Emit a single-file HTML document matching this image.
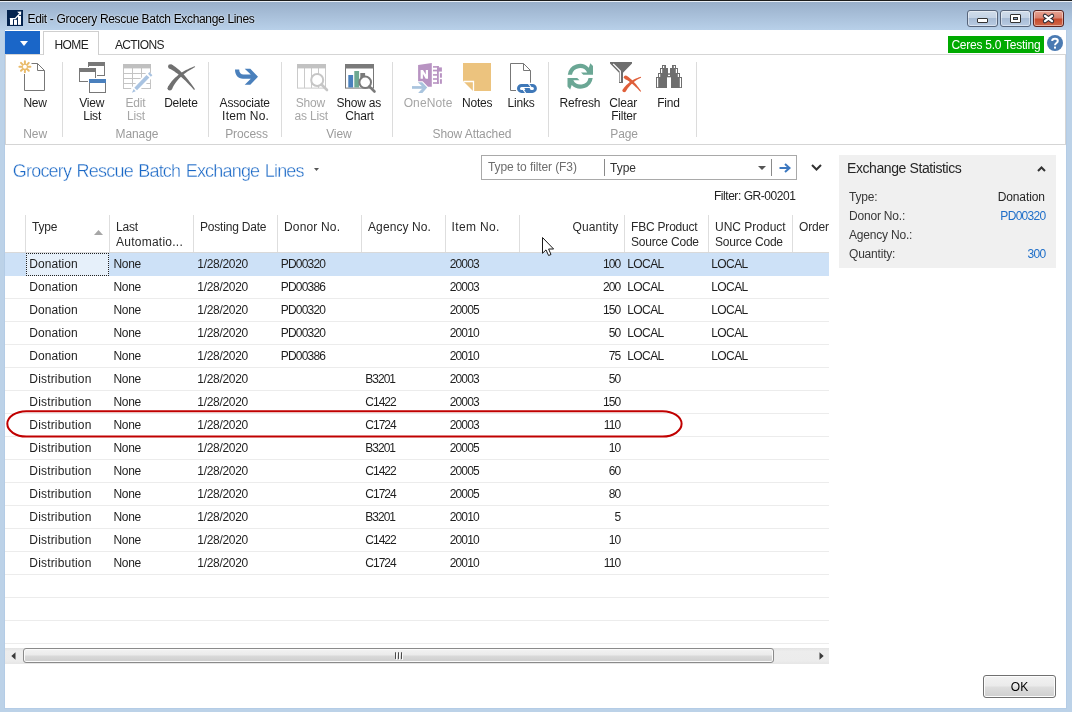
<!DOCTYPE html>
<html><head><meta charset="utf-8"><title>Edit - Grocery Rescue Batch Exchange Lines</title>
<style>
*{margin:0;padding:0;box-sizing:border-box}
html,body{width:1072px;height:712px;overflow:hidden;background:#fff;font-family:"Liberation Sans",sans-serif}
.t{position:absolute;white-space:nowrap}
.r{position:absolute}
svg{position:absolute;overflow:visible}
</style></head>
<body>
<div id="w" style="position:absolute;left:0;top:0;width:1072px;height:712px;will-change:transform">
<div class="r" style="left:0px;top:0px;width:1072px;height:712px;background:#bcd2e8;"></div>
<div class="r" style="left:0px;top:0px;width:1072px;height:30px;background:linear-gradient(#97adc8,#b8d0e9);"></div>
<div class="r" style="left:0px;top:0px;width:1072px;height:1px;background:#1c1c1c;"></div>
<div class="r" style="left:0px;top:1px;width:1072px;height:1px;background:#e9eff6;"></div>
<div class="r" style="left:4px;top:30px;width:1063px;height:679px;background:#b4cce6;"></div>
<div class="r" style="left:5px;top:30px;width:1061px;height:678px;background:#fff;"></div>
<svg style="left:7px;top:10px" width="16" height="16" viewBox="0 0 16 16">
<rect x="0" y="0" width="16" height="16" fill="#03234e"/>
<rect x="3" y="8.6" width="3" height="6.3" fill="#fff"/><rect x="7" y="9.8" width="3" height="5.1" fill="#fff"/><rect x="11" y="6" width="3" height="8.9" fill="#fff"/>
<path d="M2.8 8.7 H8.2 L12.6 4" stroke="#fff" stroke-width="1.3" fill="none"/><path d="M10.2 1.8 L14.2 1.6 L14 5.6 Z" fill="#fff"/>
</svg>
<div class="t" style="left:27.5px;top:12px;font-size:12px;line-height:15px;color:#000;letter-spacing:-0.33px;text-shadow:0 0 3px rgba(255,255,255,.55),0 0 2px rgba(255,255,255,.5)">Edit - Grocery Rescue Batch Exchange Lines</div>
<div class="r" style="left:967px;top:10px;width:31px;height:17px;background:linear-gradient(#d0dcea 0%,#c4d3e5 46%,#a7bbd4 50%,#b9cce3 100%);border:1px solid #56647a;border-radius:3px;box-shadow:inset 0 0 0 1px rgba(255,255,255,.45)"></div>
<div class="r" style="left:1000px;top:10px;width:31px;height:17px;background:linear-gradient(#d0dcea 0%,#c4d3e5 46%,#a7bbd4 50%,#b9cce3 100%);border:1px solid #56647a;border-radius:3px;box-shadow:inset 0 0 0 1px rgba(255,255,255,.45)"></div>
<div class="r" style="left:1033px;top:10px;width:31px;height:17px;background:linear-gradient(#e8a493 0%,#d98370 45%,#c74a2c 55%,#cf6a4a 100%);border:1px solid #5a2420;border-radius:3px;box-shadow:inset 0 0 0 1px rgba(255,255,255,.45)"></div>
<div class="r" style="left:977px;top:18px;width:11px;height:5px;background:#fff;border:1px solid #333;border-radius:1px"></div>
<div class="r" style="left:1010px;top:14px;width:11px;height:9px;background:#fff;border:1px solid #333;border-radius:1px"></div>
<div class="r" style="left:1013px;top:17px;width:5px;height:3px;background:#8aa2c0;border:1px solid #333"></div>
<svg style="left:1043px;top:14px" width="11" height="9" viewBox="0 0 11 9">
<path d="M2 1.9 L9 7.1 M9 1.9 L2 7.1" stroke="#2c2c34" stroke-width="4.4" stroke-linecap="round"/>
<path d="M2 1.9 L9 7.1 M9 1.9 L2 7.1" stroke="#fff" stroke-width="2.4" stroke-linecap="round"/>
</svg>
<div class="r" style="left:5px;top:31px;width:35px;height:23px;background:#1a66c8;"></div>
<svg style="left:19.5px;top:40.6px" width="8" height="5" viewBox="0 0 8 5"><path d="M0 0 H8 L4 5 Z" fill="#fff"/></svg>
<div class="r" style="left:43px;top:31px;width:56px;height:24px;background:#fff;border:1px solid #cfcfcf;border-bottom:none"></div>
<div class="r" style="left:5px;top:54px;width:38px;height:1px;background:#d5d5d5;"></div>
<div class="r" style="left:99px;top:54px;width:967px;height:1px;background:#d5d5d5;"></div>
<div class="t" style="left:54.5px;top:38px;font-size:12px;line-height:15px;color:#222;letter-spacing:-0.6px;">HOME</div>
<div class="t" style="left:115px;top:38px;font-size:12px;line-height:15px;color:#222;letter-spacing:-0.65px;">ACTIONS</div>
<div class="r" style="left:948px;top:36px;width:96px;height:17px;background:#00aa00;"></div>
<div class="t" style="left:951.4px;top:38px;font-size:12px;line-height:15px;color:#fff;letter-spacing:-0.25px;">Ceres 5.0 Testing</div>
<svg style="left:1047px;top:35px" width="16" height="16" viewBox="0 0 16 16">
<circle cx="8" cy="8" r="8" fill="#4a7ab2"/>
<path d="M5.2 6 C5.2 3 10.8 3 10.8 6 C10.8 8 8 8 8 10.2" stroke="#fff" stroke-width="2" fill="none"/>
<rect x="7" y="11.6" width="2" height="2" fill="#fff"/>
</svg>
<div class="r" style="left:5px;top:55px;width:1px;height:90px;background:#d5d5d5;"></div>
<div class="r" style="left:1065px;top:55px;width:1px;height:90px;background:#d5d5d5;"></div>
<div class="r" style="left:5px;top:144px;width:1061px;height:1px;background:#d5d5d5;"></div>
<div class="r" style="left:62px;top:62px;width:1px;height:75px;background:#dcdcdc;"></div>
<div class="r" style="left:208px;top:62px;width:1px;height:75px;background:#dcdcdc;"></div>
<div class="r" style="left:281px;top:62px;width:1px;height:75px;background:#dcdcdc;"></div>
<div class="r" style="left:392px;top:62px;width:1px;height:75px;background:#dcdcdc;"></div>
<div class="r" style="left:548px;top:62px;width:1px;height:75px;background:#dcdcdc;"></div>
<div class="r" style="left:696px;top:62px;width:1px;height:75px;background:#dcdcdc;"></div>
<div class="t" style="left:-24.799999999999997px;width:120px;text-align:center;text-indent:-0.2px;top:96px;font-size:12px;line-height:15px;color:#1e1e1e;letter-spacing:-0.2px;">New</div>
<div class="t" style="left:31.799999999999997px;width:120px;text-align:center;text-indent:-0.2px;top:96px;font-size:12px;line-height:15px;color:#1e1e1e;letter-spacing:-0.2px;">View</div>
<div class="t" style="left:32.2px;width:120px;text-align:center;text-indent:-0.2px;top:109px;font-size:12px;line-height:15px;color:#1e1e1e;letter-spacing:-0.2px;">List</div>
<div class="t" style="left:75.5px;width:120px;text-align:center;text-indent:-0.2px;top:96px;font-size:12px;line-height:15px;color:#a6a6a6;letter-spacing:-0.2px;">Edit</div>
<div class="t" style="left:76.0px;width:120px;text-align:center;text-indent:-0.2px;top:109px;font-size:12px;line-height:15px;color:#a6a6a6;letter-spacing:-0.2px;">List</div>
<div class="t" style="left:121.0px;width:120px;text-align:center;text-indent:-0.2px;top:96px;font-size:12px;line-height:15px;color:#1e1e1e;letter-spacing:-0.2px;">Delete</div>
<div class="t" style="left:184.8px;width:120px;text-align:center;text-indent:-0.2px;top:96px;font-size:12px;line-height:15px;color:#1e1e1e;letter-spacing:-0.2px;">Associate</div>
<div class="t" style="left:185.5px;width:120px;text-align:center;text-indent:0.2px;top:109px;font-size:12px;line-height:15px;color:#1e1e1e;letter-spacing:0.2px;">Item No.</div>
<div class="t" style="left:250.5px;width:120px;text-align:center;text-indent:-0.2px;top:96px;font-size:12px;line-height:15px;color:#a6a6a6;letter-spacing:-0.2px;">Show</div>
<div class="t" style="left:251.3px;width:120px;text-align:center;text-indent:-0.2px;top:109px;font-size:12px;line-height:15px;color:#a6a6a6;letter-spacing:-0.2px;">as List</div>
<div class="t" style="left:298.8px;width:120px;text-align:center;text-indent:-0.2px;top:96px;font-size:12px;line-height:15px;color:#1e1e1e;letter-spacing:-0.2px;">Show as</div>
<div class="t" style="left:299.6px;width:120px;text-align:center;text-indent:-0.2px;top:109px;font-size:12px;line-height:15px;color:#1e1e1e;letter-spacing:-0.2px;">Chart</div>
<div class="t" style="left:368.0px;width:120px;text-align:center;text-indent:0.1px;top:96px;font-size:12px;line-height:15px;color:#a6a6a6;letter-spacing:0.1px;">OneNote</div>
<div class="t" style="left:417.3px;width:120px;text-align:center;text-indent:-0.2px;top:96px;font-size:12px;line-height:15px;color:#1e1e1e;letter-spacing:-0.2px;">Notes</div>
<div class="t" style="left:461.20000000000005px;width:120px;text-align:center;text-indent:-0.2px;top:96px;font-size:12px;line-height:15px;color:#1e1e1e;letter-spacing:-0.2px;">Links</div>
<div class="t" style="left:520.0px;width:120px;text-align:center;text-indent:-0.2px;top:96px;font-size:12px;line-height:15px;color:#1e1e1e;letter-spacing:-0.2px;">Refresh</div>
<div class="t" style="left:563.2px;width:120px;text-align:center;text-indent:-0.2px;top:96px;font-size:12px;line-height:15px;color:#1e1e1e;letter-spacing:-0.2px;">Clear</div>
<div class="t" style="left:564.0px;width:120px;text-align:center;text-indent:-0.2px;top:109px;font-size:12px;line-height:15px;color:#1e1e1e;letter-spacing:-0.2px;">Filter</div>
<div class="t" style="left:608.6px;width:120px;text-align:center;text-indent:-0.2px;top:96px;font-size:12px;line-height:15px;color:#1e1e1e;letter-spacing:-0.2px;">Find</div>
<div class="t" style="left:-34.8px;width:140px;text-align:center;text-indent:-0.1px;top:127px;font-size:12px;line-height:15px;color:#9b9b9b;letter-spacing:-0.1px;">New</div>
<div class="t" style="left:67.0px;width:140px;text-align:center;text-indent:-0.1px;top:127px;font-size:12px;line-height:15px;color:#9b9b9b;letter-spacing:-0.1px;">Manage</div>
<div class="t" style="left:176.6px;width:140px;text-align:center;text-indent:-0.1px;top:127px;font-size:12px;line-height:15px;color:#9b9b9b;letter-spacing:-0.1px;">Process</div>
<div class="t" style="left:268.9px;width:140px;text-align:center;text-indent:-0.1px;top:127px;font-size:12px;line-height:15px;color:#9b9b9b;letter-spacing:-0.1px;">View</div>
<div class="t" style="left:402.0px;width:140px;text-align:center;text-indent:-0.1px;top:127px;font-size:12px;line-height:15px;color:#9b9b9b;letter-spacing:-0.1px;">Show Attached</div>
<div class="t" style="left:554.2px;width:140px;text-align:center;text-indent:-0.1px;top:127px;font-size:12px;line-height:15px;color:#9b9b9b;letter-spacing:-0.1px;">Page</div>
<svg style="left:0;top:0" width="1072" height="150" viewBox="0 0 1072 150">
<!-- New -->
<g stroke="#e9bb6a" stroke-width="2" stroke-linecap="round">
<path d="M24.9 61.3 V72.3 M19.4 66.8 H30.4 M21 62.9 L28.8 70.7 M28.8 62.9 L21 70.7"/>
</g>
<circle cx="24.9" cy="66.8" r="2" fill="#fff"/>
<path d="M31.5 63.5 H37.5 L44.5 70.5 V90.5 H24.5 V74" fill="none" stroke="#777" stroke-width="1"/>
<path d="M37.5 63.5 V70.5 H44.5" fill="none" stroke="#777" stroke-width="1"/>
<!-- View List -->
<rect x="88" y="62" width="17" height="4" fill="#787878"/>
<path d="M104.5 66 V76 M97 75.5 H105 M88.5 66 V67" stroke="#787878" stroke-width="1" fill="none"/>
<rect x="79" y="68" width="17" height="4" fill="#787878"/>
<path d="M79.5 72 V82 M79 81.5 H88 M95.5 72 V78" stroke="#787878" stroke-width="1" fill="none"/>
<rect x="89" y="79" width="17" height="4" fill="#4a80bd"/>
<path d="M89.5 83 V93 M105.5 83 V93 M89 92.5 H106" stroke="#787878" stroke-width="1" fill="none"/>
<!-- Edit List -->
<g fill="none" stroke="#c4c4c4" stroke-width="1">
<rect x="123.5" y="64.5" width="27" height="24"/>
<path d="M123 73.5 H151 M123 78.5 H151 M123 83.5 H151 M132.5 68 V89 M141.5 68 V89"/>
</g>
<rect x="123" y="64" width="28" height="4.4" fill="#c0c0c0"/>
<path d="M133.5 91 L151 73.5" stroke="#fff" stroke-width="7.5"/>
<path d="M134.3 87.7 L146.5 75.1 L149.4 77.6 L137 90.2 Z" fill="#a9c3e1"/>
<path d="M131.9 92.8 L133.7 89 L135.7 91.2 Z" fill="#a9c3e1"/>
<path d="M149.4 71.9 L152.4 75.3 L150.8 76.8 L148 73.7 Z" fill="#a9c3e1"/>
<!-- Delete -->
<path d="M169.34 68.59 L170.08 68.93 L170.85 69.32 L171.64 69.75 L172.46 70.23 L173.31 70.76 L174.19 71.34 L175.09 71.96 L176.01 72.63 L176.96 73.35 L177.94 74.12 L178.93 74.94 L179.96 75.80 L181.00 76.72 L182.07 77.68 L183.17 78.69 L184.28 79.75 L185.42 80.86 L186.58 82.01 L187.77 83.22 L188.98 84.47 L190.20 85.77 L191.46 87.12 L192.73 88.52 L194.03 89.97 L194.97 89.23 L193.87 87.62 L192.78 86.06 L191.70 84.55 L190.62 83.08 L189.57 81.67 L188.52 80.31 L187.48 79.00 L186.45 77.74 L185.43 76.53 L184.43 75.37 L183.43 74.26 L182.44 73.20 L181.47 72.19 L180.50 71.23 L179.54 70.32 L178.59 69.46 L177.65 68.65 L176.71 67.89 L175.79 67.18 L174.87 66.52 L173.96 65.92 L173.05 65.36 L172.15 64.86 L171.26 64.41 Z" fill="#707070"/><circle cx="170.3" cy="66.5" r="2.3" fill="#707070"/>
<path d="M194.82 66.29 L193.26 66.86 L191.74 67.46 L190.25 68.08 L188.80 68.73 L187.38 69.40 L186.00 70.10 L184.66 70.83 L183.36 71.58 L182.09 72.36 L180.86 73.16 L179.67 73.99 L178.52 74.85 L177.40 75.74 L176.32 76.65 L175.28 77.59 L174.28 78.56 L173.32 79.55 L172.40 80.57 L171.52 81.62 L170.68 82.70 L169.88 83.81 L169.12 84.94 L168.41 86.10 L167.74 87.28 L171.86 89.32 L172.36 88.22 L172.90 87.14 L173.48 86.08 L174.10 85.03 L174.75 84.00 L175.45 82.98 L176.18 81.97 L176.96 80.98 L177.78 80.00 L178.64 79.03 L179.54 78.08 L180.48 77.15 L181.47 76.23 L182.50 75.32 L183.57 74.43 L184.69 73.55 L185.85 72.69 L187.05 71.85 L188.29 71.02 L189.58 70.20 L190.92 69.41 L192.29 68.63 L193.71 67.86 L195.18 67.11 Z" fill="#707070"/><circle cx="169.8" cy="88.3" r="2.3" fill="#707070"/>
<!-- Associate -->
<path d="M235 69.5 H239.2 C239.2 73 241 74.5 243.5 74.5 H250.8 L244.7 68.8 H250.3 L258 76.8 L250.3 84.8 H244.7 L250.8 78.8 H243 C238 78.8 235 75 235 69.5 Z" fill="#4a80bc"/>
<!-- Show as List -->
<g fill="none" stroke="#cacaca" stroke-width="1">
<rect x="297.5" y="64.5" width="28" height="23.6"/>
<path d="M304.5 68 V88 M311.5 68 V88 M318.5 68 V88"/>
</g>
<rect x="297" y="64" width="29" height="4.4" fill="#c2c2c2"/>
<circle cx="317.2" cy="80" r="6" fill="#fff" stroke="#c6c6c6" stroke-width="2"/>
<path d="M321.5 84.5 L327 90" stroke="#c6c6c6" stroke-width="2.6" stroke-linecap="round"/>
<!-- Show as Chart -->
<rect x="345.5" y="64.5" width="28" height="23.6" fill="none" stroke="#777" stroke-width="1"/>
<rect x="345" y="64" width="29" height="4.5" fill="#7a7a7a"/>
<rect x="348.3" y="75" width="4.8" height="12.5" fill="#4a80bd"/>
<rect x="354.3" y="71" width="4.8" height="16.5" fill="#6da892"/>
<rect x="360.3" y="73" width="4.8" height="14" fill="#7a7a7a"/>
<circle cx="365.2" cy="82.3" r="5.8" fill="#fff" stroke="#7a7a7a" stroke-width="2"/>
<path d="M369.3 86.4 L374.5 91.5" stroke="#7a7a7a" stroke-width="2.6" stroke-linecap="round"/>
<!-- OneNote (disabled look) -->
<path d="M418.1 65.1 L431.8 63 V86.8 H428 L422.7 81.3 H418.1 Z" fill="#b893c2"/>
<path d="M420.6 78.7 V69.9 H423 L425.8 74.6 V69.9 H428 V78.7 H425.7 L422.9 74 V78.7 Z" fill="#fff"/>
<g fill="#b893c2">
<rect x="433" y="66.1" width="5.8" height="1.6"/><rect x="433" y="69.7" width="5" height="1.7"/><rect x="433" y="74.1" width="5" height="1.6"/>
<rect x="433" y="78.2" width="5" height="1.6"/><rect x="433" y="82.2" width="5.8" height="1.6"/>
<rect x="437" y="66.1" width="1.8" height="17.7"/>
<rect x="437" y="67.4" width="4.9" height="4.2"/><rect x="439.9" y="73.2" width="2" height="4.5"/><rect x="439.9" y="79.2" width="2" height="4.6"/>
</g>
<rect x="412" y="86.1" width="11.5" height="2.7" fill="#a9c4de"/>
<path d="M417.9 82.3 H422.2 L427.2 87.5 L422.4 92.9 H418.1 L423.3 87.5 Z" fill="#a9c4de"/>
<!-- Notes -->
<path d="M463 63 H491 V91 H473 L463 81 Z" fill="#ecc37e"/>
<path d="M463.5 81.5 H473.5 V91" fill="none" stroke="#fff" stroke-width="1.3"/>
<!-- Links -->
<path d="M516 90.5 H510.5 V63.5 H523.5 L530.5 70.5 V82.7" fill="none" stroke="#777" stroke-width="1"/>
<path d="M523.5 63.5 V70.5 H530.5" fill="none" stroke="#777" stroke-width="1"/>
<rect x="518.5" y="85.4" width="16.9" height="6" rx="3" ry="3" fill="#fff" stroke="#3f78b8" stroke-width="3"/>
<path d="M524.3 88.1 H529.6 L530.6 89.9 H525.3 Z" fill="#3f78b8"/>
<path d="M528.2 83.4 L531 87" stroke="#fff" stroke-width="1.1"/>
<path d="M523.3 89.9 L526 93.5" stroke="#fff" stroke-width="1.1"/>
<!-- Refresh -->
<path fill="#6ba795" d="M567.8 74.7 A12.3 12.3 0 0 1 588.8 67.7 L590.3 63.3 L593 66.1 L593 74.7 L583.3 74.7 L581 72.4 L587.2 72.4 A8.2 8.2 0 0 0 571.96 74.7 Z"/>
<path fill="#6ba795" transform="rotate(180 580.25 76.35)" d="M567.8 74.7 A12.3 12.3 0 0 1 588.8 67.7 L590.3 63.3 L593 66.1 L593 74.7 L583.3 74.7 L581 72.4 L587.2 72.4 A8.2 8.2 0 0 0 571.96 74.7 Z"/>
<!-- Clear Filter -->
<path d="M610 62 H632 V63.6 L623 72.8 V83 H619 V72.8 L610 63.6 Z" fill="#6e6e6e"/>
<path d="M613.2 63.9 L620.3 71 V81.9" fill="none" stroke="#fff" stroke-width="1.3"/>
<path d="M624.78 78.90 L625.28 79.14 L625.80 79.40 L626.33 79.69 L626.88 80.01 L627.44 80.35 L628.01 80.71 L628.60 81.11 L629.20 81.52 L629.82 81.97 L630.44 82.44 L631.08 82.94 L631.73 83.46 L632.39 84.01 L633.07 84.58 L633.75 85.19 L634.45 85.81 L635.16 86.47 L635.88 87.15 L636.61 87.86 L637.36 88.59 L638.11 89.35 L638.88 90.13 L639.66 90.94 L640.45 91.78 L641.15 91.22 L640.49 90.27 L639.83 89.34 L639.18 88.44 L638.54 87.57 L637.89 86.72 L637.26 85.90 L636.62 85.11 L635.99 84.34 L635.37 83.60 L634.75 82.89 L634.13 82.20 L633.52 81.54 L632.91 80.91 L632.31 80.30 L631.71 79.72 L631.11 79.16 L630.51 78.64 L629.92 78.14 L629.33 77.66 L628.75 77.22 L628.16 76.79 L627.58 76.40 L627.00 76.04 L626.42 75.70 Z" fill="#df5f3a"/><circle cx="625.6" cy="77.3" r="1.8" fill="#df5f3a"/>
<path d="M640.87 76.87 L640.00 77.08 L639.15 77.32 L638.30 77.59 L637.46 77.88 L636.63 78.20 L635.81 78.55 L635.00 78.92 L634.19 79.33 L633.40 79.76 L632.61 80.22 L631.83 80.70 L631.07 81.22 L630.31 81.76 L629.56 82.33 L628.83 82.92 L628.10 83.54 L627.39 84.19 L626.68 84.87 L625.99 85.58 L625.31 86.31 L624.64 87.06 L623.99 87.85 L623.34 88.66 L622.71 89.49 L625.69 91.51 L626.20 90.68 L626.73 89.88 L627.26 89.10 L627.80 88.35 L628.35 87.62 L628.92 86.90 L629.49 86.21 L630.08 85.54 L630.67 84.90 L631.28 84.27 L631.90 83.67 L632.53 83.08 L633.18 82.52 L633.83 81.98 L634.50 81.46 L635.19 80.96 L635.88 80.48 L636.59 80.03 L637.31 79.59 L638.05 79.17 L638.80 78.78 L639.56 78.41 L640.34 78.06 L641.13 77.73 Z" fill="#df5f3a"/><circle cx="624.2" cy="90.5" r="1.8" fill="#df5f3a"/>
<!-- Find -->
<g fill="#6e6e6e">
<rect x="662" y="65" width="4" height="3.2"/><rect x="660" y="68" width="8" height="5.2"/><rect x="658" y="73" width="10" height="4.2"/><rect x="656" y="77" width="11" height="11"/>
<rect x="672" y="65" width="4" height="3.2"/><rect x="670" y="68" width="8" height="5.2"/><rect x="670" y="73" width="10" height="4.2"/><rect x="671" y="77" width="11" height="11"/>
<rect x="667.5" y="73.3" width="3" height="4"/>
</g>
<g fill="#fff">
<rect x="663" y="66" width="1.2" height="2"/><rect x="661" y="69" width="1.2" height="4"/><rect x="659" y="74" width="1.2" height="3"/><rect x="657" y="78" width="1.2" height="9.2"/>
<rect x="673.8" y="66" width="1.2" height="2"/><rect x="675.8" y="69" width="1.2" height="4"/><rect x="677.8" y="74" width="1.2" height="3"/><rect x="679.8" y="78" width="1.2" height="9.2"/>
<rect x="668" y="74.8" width="2" height="1.2"/>
</g>
</svg>
<div class="t" style="left:12.8px;top:160px;font-size:18px;line-height:22px;color:#1a68c6;letter-spacing:-0.8px;-webkit-text-stroke:0.35px #fff;word-spacing:1.2px">Grocery Rescue Batch Exchange Lines</div>
<svg style="left:314px;top:168px" width="5" height="3" viewBox="0 0 5 3"><path d="M0 0 H5 L2.5 3 Z" fill="#555"/></svg>
<div class="r" style="left:481px;top:155px;width:316px;height:25px;border:1px solid #a9a9a9;background:#fff"></div>
<div class="r" style="left:604px;top:159px;width:1px;height:17px;background:#8a8a8a;"></div>
<div class="r" style="left:771px;top:159px;width:1px;height:17px;background:#8a8a8a;"></div>
<div class="t" style="left:488px;top:160px;font-size:12px;line-height:15px;color:#6d6d6d;letter-spacing:-0.1px;">Type to filter (F3)</div>
<div class="t" style="left:610px;top:161px;font-size:12px;line-height:15px;color:#333;">Type</div>
<svg style="left:758px;top:166px" width="8" height="4" viewBox="0 0 8 4"><path d="M0 0 H8 L4 4 Z" fill="#555"/></svg>
<svg style="left:779px;top:163px" width="12" height="10" viewBox="0 0 12 10">
<path d="M0.5 5 H10" stroke="#3c78c0" stroke-width="2"/><path d="M6 1 L10.5 5 L6 9" stroke="#3c78c0" stroke-width="2" fill="none"/>
</svg>
<svg style="left:811px;top:164px" width="11" height="7" viewBox="0 0 11 7"><path d="M1 1 L5.5 5.5 L10 1" stroke="#333" stroke-width="2" fill="none"/></svg>
<div class="t" style="right:276.55px;top:189px;font-size:12px;line-height:15px;color:#222;letter-spacing:-0.45px;">Filter: GR-00201</div>
<div class="r" style="left:25px;top:215px;width:1px;height:37px;background:#dedede;"></div>
<div class="r" style="left:109px;top:215px;width:1px;height:37px;background:#dedede;"></div>
<div class="r" style="left:193px;top:215px;width:1px;height:37px;background:#dedede;"></div>
<div class="r" style="left:277px;top:215px;width:1px;height:37px;background:#dedede;"></div>
<div class="r" style="left:361px;top:215px;width:1px;height:37px;background:#dedede;"></div>
<div class="r" style="left:445px;top:215px;width:1px;height:37px;background:#dedede;"></div>
<div class="r" style="left:519px;top:215px;width:1px;height:37px;background:#dedede;"></div>
<div class="r" style="left:624px;top:215px;width:1px;height:37px;background:#dedede;"></div>
<div class="r" style="left:708px;top:215px;width:1px;height:37px;background:#dedede;"></div>
<div class="r" style="left:792px;top:215px;width:1px;height:37px;background:#dedede;"></div>
<div class="r" style="left:5px;top:252px;width:824px;height:1px;background:#d9d9d9;"></div>
<div class="t" style="left:32px;top:220px;font-size:12px;line-height:15px;color:#2a2a2a;letter-spacing:-0.2px;">Type</div>
<div class="t" style="left:116px;top:220px;font-size:12px;line-height:15px;color:#2a2a2a;letter-spacing:-0.2px;">Last</div>
<div class="t" style="left:116px;top:235px;font-size:12px;line-height:15px;color:#2a2a2a;letter-spacing:0.25px;">Automatio...</div>
<div class="t" style="left:200px;top:220px;font-size:12px;line-height:15px;color:#2a2a2a;letter-spacing:-0.2px;">Posting Date</div>
<div class="t" style="left:284px;top:220px;font-size:12px;line-height:15px;color:#2a2a2a;letter-spacing:0.17px;">Donor No.</div>
<div class="t" style="left:368px;top:220px;font-size:12px;line-height:15px;color:#2a2a2a;letter-spacing:0.1px;">Agency No.</div>
<div class="t" style="left:451.5px;top:220px;font-size:12px;line-height:15px;color:#2a2a2a;letter-spacing:0.37px;">Item No.</div>
<div class="t" style="left:631px;top:220px;font-size:12px;line-height:15px;color:#2a2a2a;letter-spacing:-0.2px;">FBC Product</div>
<div class="t" style="left:631px;top:235px;font-size:12px;line-height:15px;color:#2a2a2a;letter-spacing:-0.2px;">Source Code</div>
<div class="t" style="left:715px;top:220px;font-size:12px;line-height:15px;color:#2a2a2a;letter-spacing:0.0px;">UNC Product</div>
<div class="t" style="left:715px;top:235px;font-size:12px;line-height:15px;color:#2a2a2a;letter-spacing:-0.2px;">Source Code</div>
<div class="t" style="left:799px;top:220px;font-size:12px;line-height:15px;color:#2a2a2a;letter-spacing:-0.2px;">Order</div>
<div class="t" style="right:453.65px;top:220px;font-size:12px;line-height:15px;color:#2a2a2a;letter-spacing:0.15px;">Quantity</div>
<svg style="left:94px;top:230px" width="9" height="5" viewBox="0 0 9 5"><path d="M0 5 L4.5 0 L9 5 Z" fill="#a6a6a6"/></svg>
<div class="r" style="left:5px;top:275px;width:824px;height:1px;background:#ececec;"></div>
<div class="r" style="left:5px;top:298px;width:824px;height:1px;background:#ececec;"></div>
<div class="r" style="left:5px;top:321px;width:824px;height:1px;background:#ececec;"></div>
<div class="r" style="left:5px;top:344px;width:824px;height:1px;background:#ececec;"></div>
<div class="r" style="left:5px;top:367px;width:824px;height:1px;background:#ececec;"></div>
<div class="r" style="left:5px;top:390px;width:824px;height:1px;background:#ececec;"></div>
<div class="r" style="left:5px;top:413px;width:824px;height:1px;background:#ececec;"></div>
<div class="r" style="left:5px;top:436px;width:824px;height:1px;background:#ececec;"></div>
<div class="r" style="left:5px;top:459px;width:824px;height:1px;background:#ececec;"></div>
<div class="r" style="left:5px;top:482px;width:824px;height:1px;background:#ececec;"></div>
<div class="r" style="left:5px;top:505px;width:824px;height:1px;background:#ececec;"></div>
<div class="r" style="left:5px;top:528px;width:824px;height:1px;background:#ececec;"></div>
<div class="r" style="left:5px;top:551px;width:824px;height:1px;background:#ececec;"></div>
<div class="r" style="left:5px;top:574px;width:824px;height:1px;background:#ececec;"></div>
<div class="r" style="left:5px;top:597px;width:824px;height:1px;background:#ececec;"></div>
<div class="r" style="left:5px;top:620px;width:824px;height:1px;background:#ececec;"></div>
<div class="r" style="left:5px;top:643px;width:824px;height:1px;background:#ececec;"></div>
<div class="r" style="left:5px;top:253px;width:824px;height:23px;background:#cde1f7;"></div>
<div class="r" style="left:26px;top:253px;width:83px;height:23px;background:#e6f0fa;border:1px dotted #222"></div>
<div class="t" style="left:29.3px;top:257px;font-size:12px;line-height:15px;color:#1e1e1e;letter-spacing:0.05px;">Donation</div>
<div class="t" style="left:113.5px;top:257px;font-size:12px;line-height:15px;color:#1e1e1e;letter-spacing:-0.35px;">None</div>
<div class="t" style="left:197.3px;top:257px;font-size:12px;line-height:15px;color:#1e1e1e;letter-spacing:-0.3px;">1/28/2020</div>
<div class="t" style="left:280.8px;top:257px;font-size:12px;line-height:15px;color:#1e1e1e;letter-spacing:-0.8px;">PD00320</div>
<div class="t" style="left:449.7px;top:257px;font-size:12px;line-height:15px;color:#1e1e1e;letter-spacing:-0.85px;">20003</div>
<div class="t" style="right:451.65px;top:257px;font-size:12px;line-height:15px;color:#1e1e1e;letter-spacing:-0.85px;">100</div>
<div class="t" style="left:627.3px;top:257px;font-size:12px;line-height:15px;color:#1e1e1e;letter-spacing:-0.6px;">LOCAL</div>
<div class="t" style="left:711.3px;top:257px;font-size:12px;line-height:15px;color:#1e1e1e;letter-spacing:-0.6px;">LOCAL</div>
<div class="t" style="left:29.3px;top:280px;font-size:12px;line-height:15px;color:#1e1e1e;letter-spacing:0.05px;">Donation</div>
<div class="t" style="left:113.5px;top:280px;font-size:12px;line-height:15px;color:#1e1e1e;letter-spacing:-0.35px;">None</div>
<div class="t" style="left:197.3px;top:280px;font-size:12px;line-height:15px;color:#1e1e1e;letter-spacing:-0.3px;">1/28/2020</div>
<div class="t" style="left:280.8px;top:280px;font-size:12px;line-height:15px;color:#1e1e1e;letter-spacing:-0.8px;">PD00386</div>
<div class="t" style="left:449.7px;top:280px;font-size:12px;line-height:15px;color:#1e1e1e;letter-spacing:-0.85px;">20003</div>
<div class="t" style="right:451.65px;top:280px;font-size:12px;line-height:15px;color:#1e1e1e;letter-spacing:-0.85px;">200</div>
<div class="t" style="left:627.3px;top:280px;font-size:12px;line-height:15px;color:#1e1e1e;letter-spacing:-0.6px;">LOCAL</div>
<div class="t" style="left:711.3px;top:280px;font-size:12px;line-height:15px;color:#1e1e1e;letter-spacing:-0.6px;">LOCAL</div>
<div class="t" style="left:29.3px;top:303px;font-size:12px;line-height:15px;color:#1e1e1e;letter-spacing:0.05px;">Donation</div>
<div class="t" style="left:113.5px;top:303px;font-size:12px;line-height:15px;color:#1e1e1e;letter-spacing:-0.35px;">None</div>
<div class="t" style="left:197.3px;top:303px;font-size:12px;line-height:15px;color:#1e1e1e;letter-spacing:-0.3px;">1/28/2020</div>
<div class="t" style="left:280.8px;top:303px;font-size:12px;line-height:15px;color:#1e1e1e;letter-spacing:-0.8px;">PD00320</div>
<div class="t" style="left:449.7px;top:303px;font-size:12px;line-height:15px;color:#1e1e1e;letter-spacing:-0.85px;">20005</div>
<div class="t" style="right:451.65px;top:303px;font-size:12px;line-height:15px;color:#1e1e1e;letter-spacing:-0.85px;">150</div>
<div class="t" style="left:627.3px;top:303px;font-size:12px;line-height:15px;color:#1e1e1e;letter-spacing:-0.6px;">LOCAL</div>
<div class="t" style="left:711.3px;top:303px;font-size:12px;line-height:15px;color:#1e1e1e;letter-spacing:-0.6px;">LOCAL</div>
<div class="t" style="left:29.3px;top:326px;font-size:12px;line-height:15px;color:#1e1e1e;letter-spacing:0.05px;">Donation</div>
<div class="t" style="left:113.5px;top:326px;font-size:12px;line-height:15px;color:#1e1e1e;letter-spacing:-0.35px;">None</div>
<div class="t" style="left:197.3px;top:326px;font-size:12px;line-height:15px;color:#1e1e1e;letter-spacing:-0.3px;">1/28/2020</div>
<div class="t" style="left:280.8px;top:326px;font-size:12px;line-height:15px;color:#1e1e1e;letter-spacing:-0.8px;">PD00320</div>
<div class="t" style="left:449.7px;top:326px;font-size:12px;line-height:15px;color:#1e1e1e;letter-spacing:-0.85px;">20010</div>
<div class="t" style="right:451.65px;top:326px;font-size:12px;line-height:15px;color:#1e1e1e;letter-spacing:-0.85px;">50</div>
<div class="t" style="left:627.3px;top:326px;font-size:12px;line-height:15px;color:#1e1e1e;letter-spacing:-0.6px;">LOCAL</div>
<div class="t" style="left:711.3px;top:326px;font-size:12px;line-height:15px;color:#1e1e1e;letter-spacing:-0.6px;">LOCAL</div>
<div class="t" style="left:29.3px;top:349px;font-size:12px;line-height:15px;color:#1e1e1e;letter-spacing:0.05px;">Donation</div>
<div class="t" style="left:113.5px;top:349px;font-size:12px;line-height:15px;color:#1e1e1e;letter-spacing:-0.35px;">None</div>
<div class="t" style="left:197.3px;top:349px;font-size:12px;line-height:15px;color:#1e1e1e;letter-spacing:-0.3px;">1/28/2020</div>
<div class="t" style="left:280.8px;top:349px;font-size:12px;line-height:15px;color:#1e1e1e;letter-spacing:-0.8px;">PD00386</div>
<div class="t" style="left:449.7px;top:349px;font-size:12px;line-height:15px;color:#1e1e1e;letter-spacing:-0.85px;">20010</div>
<div class="t" style="right:451.65px;top:349px;font-size:12px;line-height:15px;color:#1e1e1e;letter-spacing:-0.85px;">75</div>
<div class="t" style="left:627.3px;top:349px;font-size:12px;line-height:15px;color:#1e1e1e;letter-spacing:-0.6px;">LOCAL</div>
<div class="t" style="left:711.3px;top:349px;font-size:12px;line-height:15px;color:#1e1e1e;letter-spacing:-0.6px;">LOCAL</div>
<div class="t" style="left:29.3px;top:372px;font-size:12px;line-height:15px;color:#1e1e1e;letter-spacing:0.18px;">Distribution</div>
<div class="t" style="left:113.5px;top:372px;font-size:12px;line-height:15px;color:#1e1e1e;letter-spacing:-0.35px;">None</div>
<div class="t" style="left:197.3px;top:372px;font-size:12px;line-height:15px;color:#1e1e1e;letter-spacing:-0.3px;">1/28/2020</div>
<div class="t" style="left:365.3px;top:372px;font-size:12px;line-height:15px;color:#1e1e1e;letter-spacing:-1.0px;">B3201</div>
<div class="t" style="left:449.7px;top:372px;font-size:12px;line-height:15px;color:#1e1e1e;letter-spacing:-0.85px;">20003</div>
<div class="t" style="right:451.65px;top:372px;font-size:12px;line-height:15px;color:#1e1e1e;letter-spacing:-0.85px;">50</div>
<div class="t" style="left:29.3px;top:395px;font-size:12px;line-height:15px;color:#1e1e1e;letter-spacing:0.18px;">Distribution</div>
<div class="t" style="left:113.5px;top:395px;font-size:12px;line-height:15px;color:#1e1e1e;letter-spacing:-0.35px;">None</div>
<div class="t" style="left:197.3px;top:395px;font-size:12px;line-height:15px;color:#1e1e1e;letter-spacing:-0.3px;">1/28/2020</div>
<div class="t" style="left:365.3px;top:395px;font-size:12px;line-height:15px;color:#1e1e1e;letter-spacing:-1.0px;">C1422</div>
<div class="t" style="left:449.7px;top:395px;font-size:12px;line-height:15px;color:#1e1e1e;letter-spacing:-0.85px;">20003</div>
<div class="t" style="right:451.65px;top:395px;font-size:12px;line-height:15px;color:#1e1e1e;letter-spacing:-0.85px;">150</div>
<div class="t" style="left:29.3px;top:418px;font-size:12px;line-height:15px;color:#1e1e1e;letter-spacing:0.18px;">Distribution</div>
<div class="t" style="left:113.5px;top:418px;font-size:12px;line-height:15px;color:#1e1e1e;letter-spacing:-0.35px;">None</div>
<div class="t" style="left:197.3px;top:418px;font-size:12px;line-height:15px;color:#1e1e1e;letter-spacing:-0.3px;">1/28/2020</div>
<div class="t" style="left:365.3px;top:418px;font-size:12px;line-height:15px;color:#1e1e1e;letter-spacing:-1.0px;">C1724</div>
<div class="t" style="left:449.7px;top:418px;font-size:12px;line-height:15px;color:#1e1e1e;letter-spacing:-0.85px;">20003</div>
<div class="t" style="right:451.65px;top:418px;font-size:12px;line-height:15px;color:#1e1e1e;letter-spacing:-0.85px;">110</div>
<div class="t" style="left:29.3px;top:441px;font-size:12px;line-height:15px;color:#1e1e1e;letter-spacing:0.18px;">Distribution</div>
<div class="t" style="left:113.5px;top:441px;font-size:12px;line-height:15px;color:#1e1e1e;letter-spacing:-0.35px;">None</div>
<div class="t" style="left:197.3px;top:441px;font-size:12px;line-height:15px;color:#1e1e1e;letter-spacing:-0.3px;">1/28/2020</div>
<div class="t" style="left:365.3px;top:441px;font-size:12px;line-height:15px;color:#1e1e1e;letter-spacing:-1.0px;">B3201</div>
<div class="t" style="left:449.7px;top:441px;font-size:12px;line-height:15px;color:#1e1e1e;letter-spacing:-0.85px;">20005</div>
<div class="t" style="right:451.65px;top:441px;font-size:12px;line-height:15px;color:#1e1e1e;letter-spacing:-0.85px;">10</div>
<div class="t" style="left:29.3px;top:464px;font-size:12px;line-height:15px;color:#1e1e1e;letter-spacing:0.18px;">Distribution</div>
<div class="t" style="left:113.5px;top:464px;font-size:12px;line-height:15px;color:#1e1e1e;letter-spacing:-0.35px;">None</div>
<div class="t" style="left:197.3px;top:464px;font-size:12px;line-height:15px;color:#1e1e1e;letter-spacing:-0.3px;">1/28/2020</div>
<div class="t" style="left:365.3px;top:464px;font-size:12px;line-height:15px;color:#1e1e1e;letter-spacing:-1.0px;">C1422</div>
<div class="t" style="left:449.7px;top:464px;font-size:12px;line-height:15px;color:#1e1e1e;letter-spacing:-0.85px;">20005</div>
<div class="t" style="right:451.65px;top:464px;font-size:12px;line-height:15px;color:#1e1e1e;letter-spacing:-0.85px;">60</div>
<div class="t" style="left:29.3px;top:487px;font-size:12px;line-height:15px;color:#1e1e1e;letter-spacing:0.18px;">Distribution</div>
<div class="t" style="left:113.5px;top:487px;font-size:12px;line-height:15px;color:#1e1e1e;letter-spacing:-0.35px;">None</div>
<div class="t" style="left:197.3px;top:487px;font-size:12px;line-height:15px;color:#1e1e1e;letter-spacing:-0.3px;">1/28/2020</div>
<div class="t" style="left:365.3px;top:487px;font-size:12px;line-height:15px;color:#1e1e1e;letter-spacing:-1.0px;">C1724</div>
<div class="t" style="left:449.7px;top:487px;font-size:12px;line-height:15px;color:#1e1e1e;letter-spacing:-0.85px;">20005</div>
<div class="t" style="right:451.65px;top:487px;font-size:12px;line-height:15px;color:#1e1e1e;letter-spacing:-0.85px;">80</div>
<div class="t" style="left:29.3px;top:510px;font-size:12px;line-height:15px;color:#1e1e1e;letter-spacing:0.18px;">Distribution</div>
<div class="t" style="left:113.5px;top:510px;font-size:12px;line-height:15px;color:#1e1e1e;letter-spacing:-0.35px;">None</div>
<div class="t" style="left:197.3px;top:510px;font-size:12px;line-height:15px;color:#1e1e1e;letter-spacing:-0.3px;">1/28/2020</div>
<div class="t" style="left:365.3px;top:510px;font-size:12px;line-height:15px;color:#1e1e1e;letter-spacing:-1.0px;">B3201</div>
<div class="t" style="left:449.7px;top:510px;font-size:12px;line-height:15px;color:#1e1e1e;letter-spacing:-0.85px;">20010</div>
<div class="t" style="right:451.65px;top:510px;font-size:12px;line-height:15px;color:#1e1e1e;letter-spacing:-0.85px;">5</div>
<div class="t" style="left:29.3px;top:533px;font-size:12px;line-height:15px;color:#1e1e1e;letter-spacing:0.18px;">Distribution</div>
<div class="t" style="left:113.5px;top:533px;font-size:12px;line-height:15px;color:#1e1e1e;letter-spacing:-0.35px;">None</div>
<div class="t" style="left:197.3px;top:533px;font-size:12px;line-height:15px;color:#1e1e1e;letter-spacing:-0.3px;">1/28/2020</div>
<div class="t" style="left:365.3px;top:533px;font-size:12px;line-height:15px;color:#1e1e1e;letter-spacing:-1.0px;">C1422</div>
<div class="t" style="left:449.7px;top:533px;font-size:12px;line-height:15px;color:#1e1e1e;letter-spacing:-0.85px;">20010</div>
<div class="t" style="right:451.65px;top:533px;font-size:12px;line-height:15px;color:#1e1e1e;letter-spacing:-0.85px;">10</div>
<div class="t" style="left:29.3px;top:556px;font-size:12px;line-height:15px;color:#1e1e1e;letter-spacing:0.18px;">Distribution</div>
<div class="t" style="left:113.5px;top:556px;font-size:12px;line-height:15px;color:#1e1e1e;letter-spacing:-0.35px;">None</div>
<div class="t" style="left:197.3px;top:556px;font-size:12px;line-height:15px;color:#1e1e1e;letter-spacing:-0.3px;">1/28/2020</div>
<div class="t" style="left:365.3px;top:556px;font-size:12px;line-height:15px;color:#1e1e1e;letter-spacing:-1.0px;">C1724</div>
<div class="t" style="left:449.7px;top:556px;font-size:12px;line-height:15px;color:#1e1e1e;letter-spacing:-0.85px;">20010</div>
<div class="t" style="right:451.65px;top:556px;font-size:12px;line-height:15px;color:#1e1e1e;letter-spacing:-0.85px;">110</div>
<div class="r" style="left:5px;top:648px;width:824px;height:16px;background:linear-gradient(#e3e3e3,#ededed 20%,#ececec 80%,#e6e6e6);"></div>
<svg style="left:11px;top:652px" width="5" height="8" viewBox="0 0 5 8"><path d="M4.5 0.3 L0.3 4 L4.5 7.7 Z" fill="#3a3a3a"/></svg>
<svg style="left:819px;top:652px" width="5" height="8" viewBox="0 0 5 8"><path d="M0.5 0.3 L4.7 4 L0.5 7.7 Z" fill="#3a3a3a"/></svg>
<div class="r" style="left:23px;top:648px;width:751px;height:15px;border:1px solid #8a8a8a;border-radius:3px;background:linear-gradient(#f3f3f3 0%,#ebebeb 45%,#d9d9d9 55%,#cdcdcd 100%);box-shadow:inset 0 0 0 1px #fafafa"></div>
<div class="r" style="left:394.5px;top:652px;width:1.6px;height:7px;background:#4a4a4a;border-radius:0.8px;box-shadow:1px 1px 0 #fafafa"></div>
<div class="r" style="left:397.5px;top:652px;width:1.6px;height:7px;background:#4a4a4a;border-radius:0.8px;box-shadow:1px 1px 0 #fafafa"></div>
<div class="r" style="left:400.5px;top:652px;width:1.6px;height:7px;background:#4a4a4a;border-radius:0.8px;box-shadow:1px 1px 0 #fafafa"></div>
<div class="r" style="left:839px;top:155px;width:217px;height:113px;background:#f0f0f0;"></div>
<div class="t" style="left:847px;top:159px;font-size:14px;line-height:18px;color:#262626;letter-spacing:-0.41px;">Exchange Statistics</div>
<svg style="left:1037px;top:166px" width="9" height="6" viewBox="0 0 9 6"><path d="M1 5 L4.5 1.5 L8 5" stroke="#333" stroke-width="2" fill="none"/></svg>
<div class="t" style="left:849px;top:190px;font-size:12px;line-height:15px;color:#383838;letter-spacing:-0.2px;">Type:</div>
<div class="t" style="right:27.100000000000044px;top:190px;font-size:12px;line-height:15px;color:#262626;letter-spacing:-0.1px;">Donation</div>
<div class="t" style="left:849px;top:209px;font-size:12px;line-height:15px;color:#383838;letter-spacing:-0.2px;">Donor No.:</div>
<div class="t" style="right:26.500000000000046px;top:209px;font-size:12px;line-height:15px;color:#1e6ec8;letter-spacing:-0.7px;">PD00320</div>
<div class="t" style="left:849px;top:228px;font-size:12px;line-height:15px;color:#383838;letter-spacing:-0.2px;">Agency No.:</div>
<div class="t" style="left:849px;top:247px;font-size:12px;line-height:15px;color:#383838;letter-spacing:-0.2px;">Quantity:</div>
<div class="t" style="right:26.500000000000046px;top:247px;font-size:12px;line-height:15px;color:#1e6ec8;letter-spacing:-0.7px;">300</div>
<div class="r" style="left:983px;top:675px;width:73px;height:23px;border:1px solid #707070;border-radius:3px;background:linear-gradient(#f2f2f2 0%,#ebebeb 45%,#dddddd 55%,#cfcfcf 100%);box-shadow:inset 0 0 0 1px #fcfcfc"></div>
<div class="t" style="left:989.5px;width:60px;text-align:center;top:680px;font-size:12px;line-height:15px;color:#000;">OK</div>
<svg style="left:0px;top:0px" width="1072" height="712" viewBox="0 0 1072 712">
<rect x="7.3" y="411.2" width="674.3" height="25.3" rx="19" ry="12.65" fill="none" stroke="#c00000" stroke-width="2"/>
</svg>
<svg style="left:542px;top:237px" width="13" height="20" viewBox="0 0 13 20">
<path d="M0.5 0.5 L0.5 16.3 L4 12.9 L6.6 18.5 L9 17.5 L6.6 12 L11.6 12 Z" fill="#fff" stroke="#1a1a1a" stroke-width="1" stroke-linejoin="round"/>
</svg>

</div>
</body></html>
